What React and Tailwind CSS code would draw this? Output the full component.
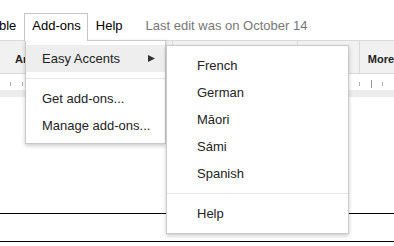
import React from "react";

const font = { fontFamily: '"Liberation Sans", Arial, sans-serif' };

function Ruler() {
  return (
    <svg width="394" height="16" className="block">
      <line x1="10.5" y1="8" x2="10.5" y2="12" stroke="#b0b0b0" />
      <line x1="22.5" y1="8" x2="22.5" y2="12" stroke="#b0b0b0" />
      <line x1="359.5" y1="8" x2="359.5" y2="12" stroke="#b0b0b0" />
      <line x1="371.5" y1="6" x2="371.5" y2="14" stroke="#9a9a9a" />
      <line x1="382.5" y1="8" x2="382.5" y2="12" stroke="#b0b0b0" />
    </svg>
  );
}

function MenuItem({ children, className = "" }) {
  return (
    <div className={`h-[27px] flex items-center text-[13px] leading-[15px] text-[#222] ${className}`}>
      {children}
    </div>
  );
}

export default function App() {
  return (
    <div className="relative w-[394px] h-[246px] overflow-hidden bg-white" style={font}>
      {/* Menu bar */}
      <div className="h-[40px] flex items-start pt-[13px] text-[13px] leading-[15px] text-black">
        <div className="ml-[-1px] pt-[5px]">ble</div>
        <div className="relative z-20 ml-[8px] h-[28px] bg-white border border-b-0 border-[#c6c6c6] pl-[7px] pr-[6px] pt-[4px]">
          Add-ons
        </div>
        <div className="pl-[8px] pt-[5px]">Help</div>
        <div className="pl-[23px] pt-[5px] text-[#777]">Last edit was on October 14</div>
      </div>

      {/* Toolbar */}
      <div className="h-[34px] bg-[#f1f1f1] border-t border-b border-[#d9d9d9] flex text-[11px] leading-[13px] font-bold text-[#222]">
        <div className="w-[173px] pl-[15px] pt-[12px]">Arial</div>
        <div className="w-px bg-[#d9d9d9]" />
        <div className="w-[125px]" />
        <div className="w-px bg-[#d9d9d9]" />
        <div className="w-[61px] pl-[49px] pt-[11px]">
          <div className="w-[2px] h-[13px] bg-[#333]" />
        </div>
        <div className="w-px bg-[#d9d9d9]" />
        <div className="pl-[8px] pt-[12px] whitespace-nowrap">More</div>
      </div>

      {/* Ruler */}
      <div className="h-[16px] bg-white">
        <Ruler />
      </div>
      <div className="h-[7px] bg-[#ececec]" />

      {/* Document */}
      <div className="h-[116px]" />
      <div className="h-px bg-black" />
      <div className="h-[27px]" />
      <div className="h-px bg-black" />

      {/* Add-ons menu */}
      <div className="absolute z-10 left-[25px] top-[40px] w-[141px] bg-white border border-[#c9c9c9] shadow-[0_2px_4px_rgba(0,0,0,0.2)] pt-[4px] pb-[4px]">
        <MenuItem className="bg-[#eeeeee] pl-[16px] pr-[10px] justify-between">
          <span>Easy Accents</span>
          <svg width="7" height="7" viewBox="0 0 7 7" className="block">
            <polygon points="0,0 7,3.5 0,7" fill="#333" />
          </svg>
        </MenuItem>
        <div className="my-[6px] h-px bg-[#e5e5e5]" />
        <MenuItem className="pl-[16px]">Get add-ons...</MenuItem>
        <MenuItem className="pl-[16px]">Manage add-ons...</MenuItem>
      </div>

      {/* Easy Accents submenu */}
      <div className="absolute z-30 left-[166px] top-[45px] w-[183px] bg-white border border-[#c9c9c9] shadow-[0_2px_4px_rgba(0,0,0,0.2)] pt-[6px] pb-[6px]">
        <MenuItem className="pl-[30px]">French</MenuItem>
        <MenuItem className="pl-[30px]">German</MenuItem>
        <MenuItem className="pl-[30px]">Māori</MenuItem>
        <MenuItem className="pl-[30px]">Sámi</MenuItem>
        <MenuItem className="pl-[30px]">Spanish</MenuItem>
        <div className="my-[6px] h-px bg-[#e5e5e5]" />
        <MenuItem className="pl-[30px]">Help</MenuItem>
      </div>
    </div>
  );
}
